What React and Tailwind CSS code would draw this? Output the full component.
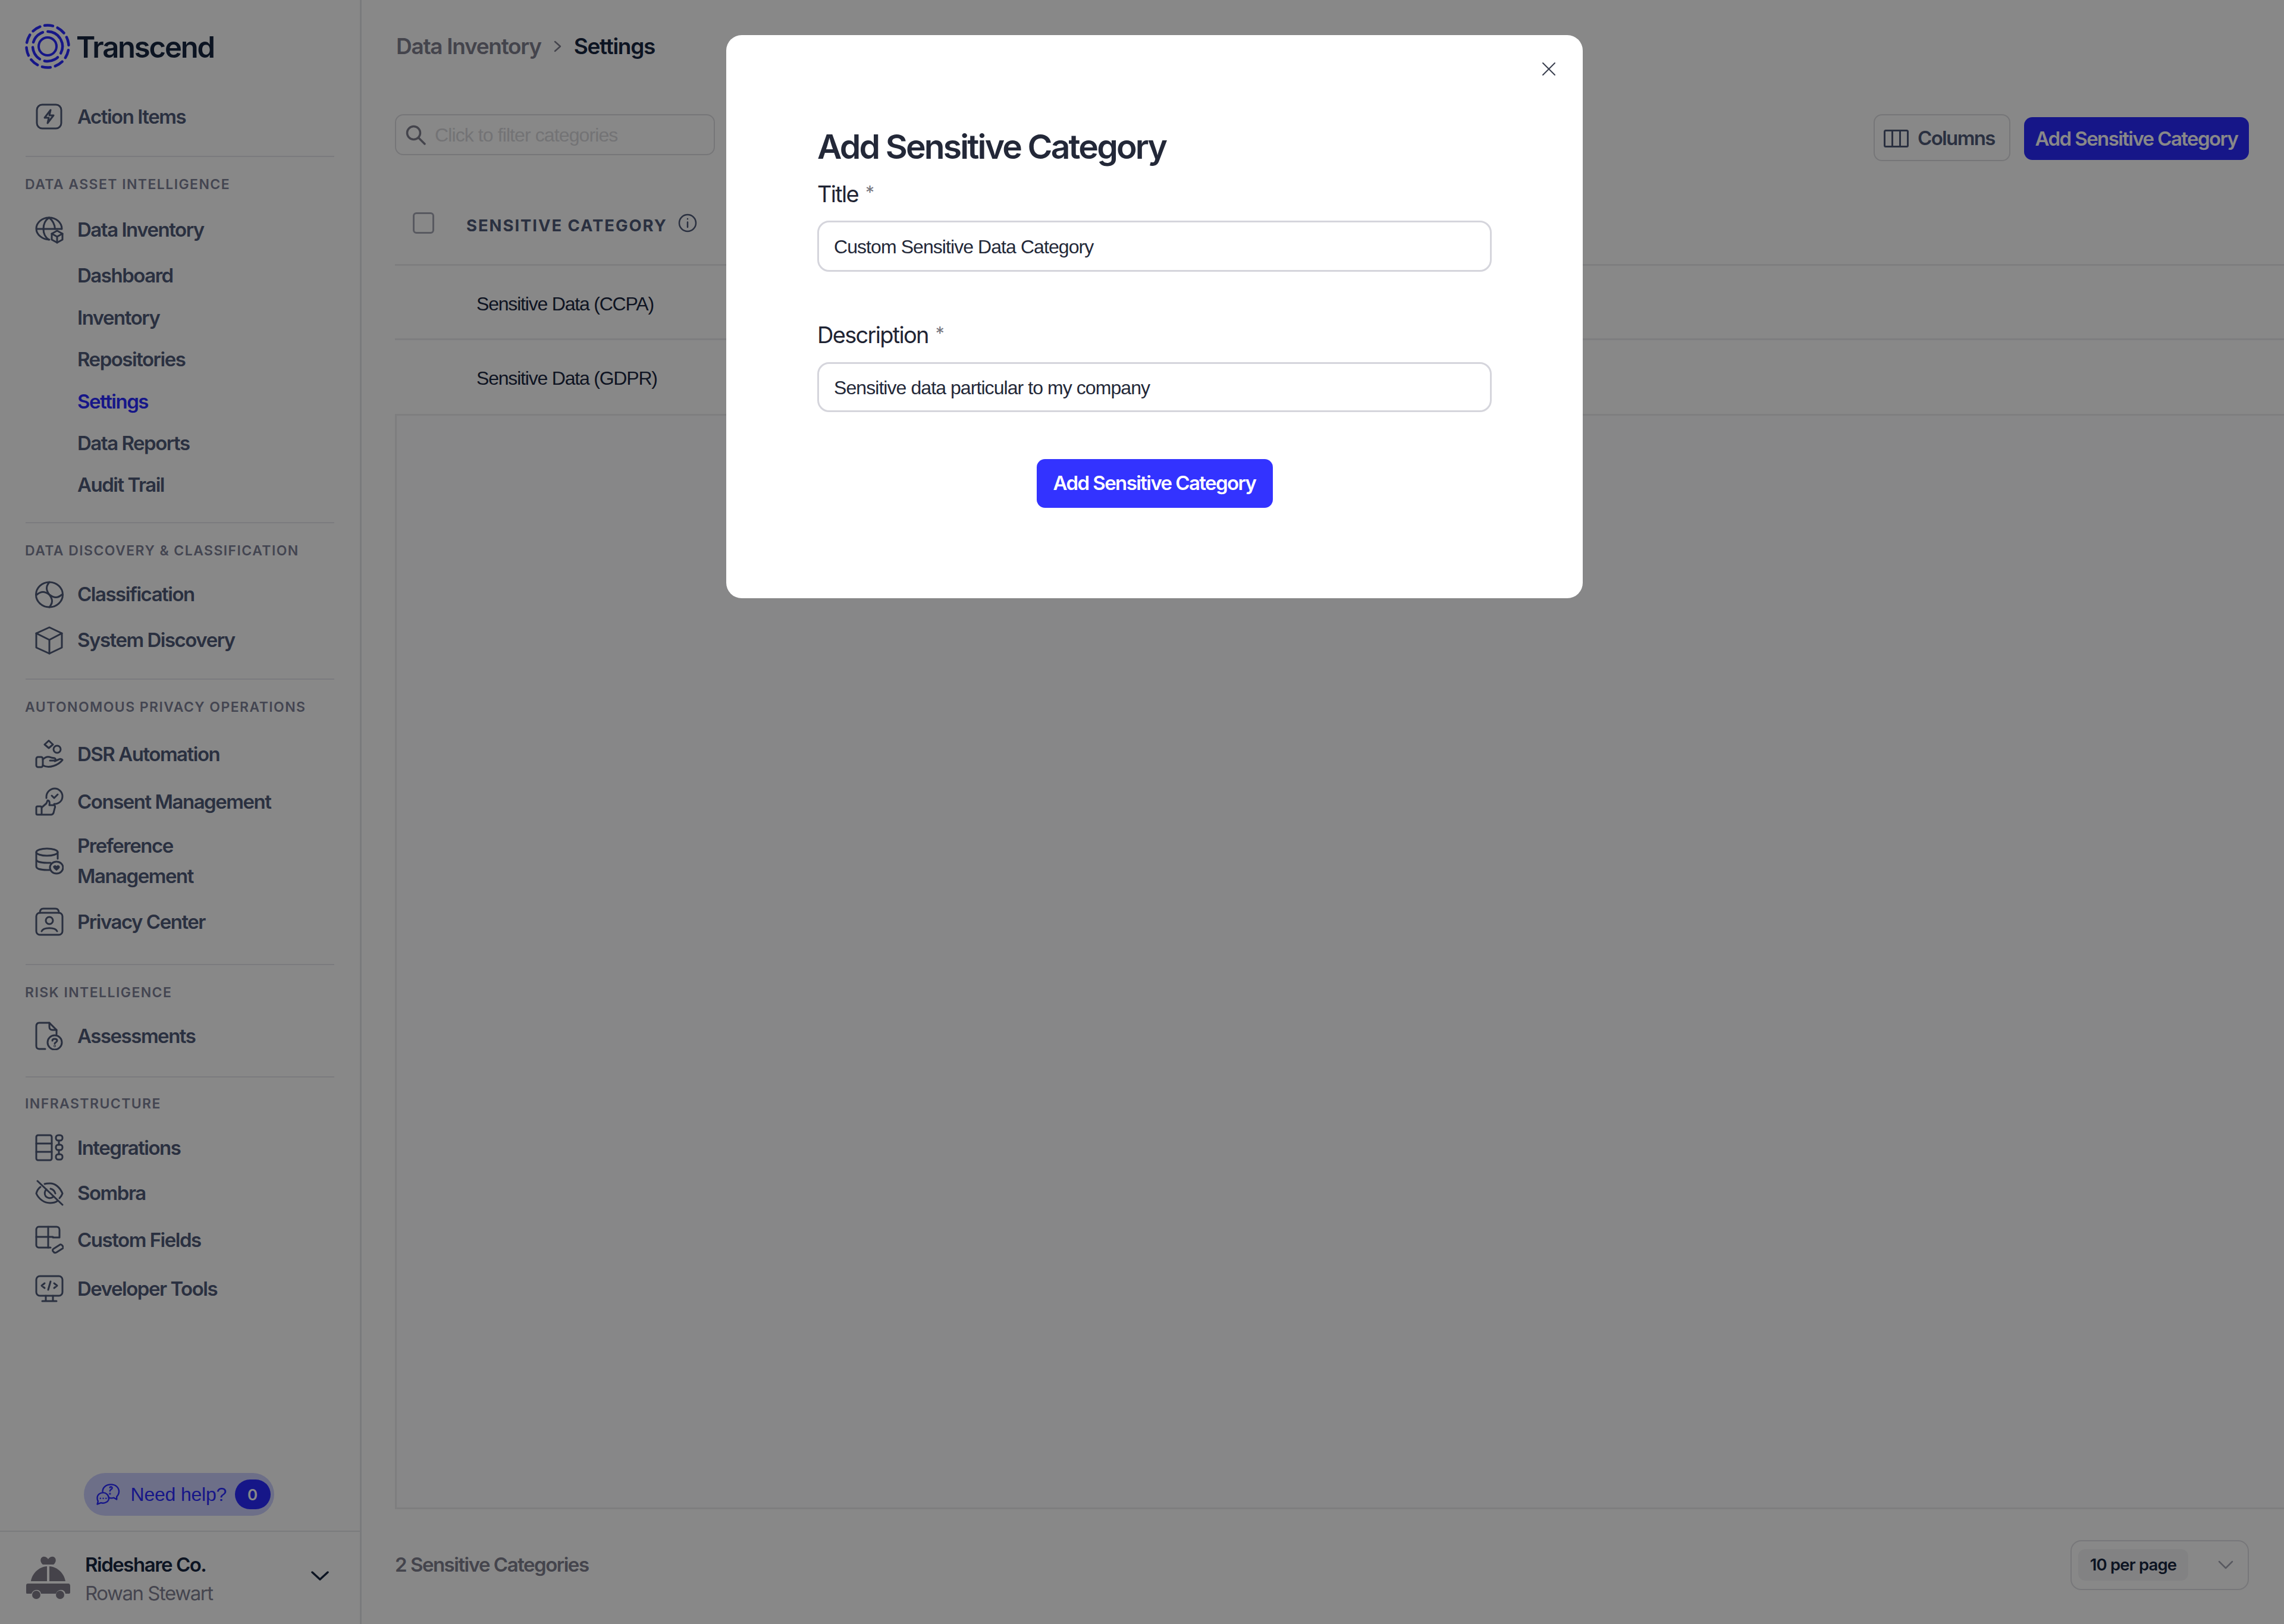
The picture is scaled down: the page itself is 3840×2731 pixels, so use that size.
import React from "react";

const S = { fill: "none", stroke: "currentColor", strokeWidth: 3, strokeLinecap: "round", strokeLinejoin: "round" };
const Ico = ({ children, className = "w-[48px] h-[48px]", vb = "0 0 48 48" }) => (
  <svg viewBox={vb} className={className + " shrink-0"} {...S}>{children}</svg>
);

const icons = {
  action: <Ico><rect x="3" y="4" width="41" height="40" rx="9" /><path d="M26 13 L16 26 H23 L21 35 L31 22 H24 Z" /></Ico>,
  globeBox: <Ico>
    <path d="M24 41C13 41 2 33 2 22.500C2 12 12 4 23.500 4C35 4 45 12 45 23" />
    <path d="M3 23H44" /><path d="M23.500 4C16 9 14 17 14 23C14 30 17 37 23 41" /><path d="M23.500 4C30 9 33 16 33.500 23" />
    <path d="M37 26L46 31V41L37 46L28 41V31Z" /><path d="M28 31L37 36L46 31M37 36V46" />
  </Ico>,
  classify: <Ico>
    <ellipse cx="24" cy="24" rx="22.500" ry="21" />
    <path d="M3 24C10 18 16 18 24 24C32 30 38 30 45 24" />
    <path d="M24 3C18 10 18 16 24 24C30 32 30 38 24 45" />
  </Ico>,
  box: <Ico>
    <path d="M24 2L45 12V36L24 46L2 36V12Z" /><path d="M2 12L24 23L45 12M24 23V46" />
  </Ico>,
  dsr: <Ico>
    <path d="M16 8L23 1.500L30 8L23 14Z" />
    <circle cx="37" cy="16" r="6" />
    <rect x="2" y="29" width="11" height="17" rx="3" />
    <path d="M13 33C18 28 23 28 27 30L33 31C35 32 35 35 31 35H25" />
    <path d="M13 43C18 46 25 46 31 44C37 42 43 38 46 34C45 32 42 32 40 33L33 36" />
  </Ico>,
  consent: <Ico>
    <path d="M19 18C18 8 26 2 33 2C40 2 46 8 46 15C46 23 40 28 32 28" />
    <path d="M28 14L32 18L38 12" />
    <rect x="2" y="32" width="9" height="14" rx="2" />
    <path d="M11 34L19 27L21 22C24 22 25 25 24 30H31C34 30 34 33 33 35L31 43C30 45 29 46 27 46H11" />
  </Ico>,
  pref: <Ico>
    <ellipse cx="20" cy="9" rx="18" ry="6" />
    <path d="M2 9V33C2 37 10 39 20 39H24M38 9V20M2 21C2 25 10 27 20 27H26" />
    <ellipse cx="36" cy="35" rx="11" ry="10" />
    <path d="M31 33C32 31 35 31 36 33C37 31 40 31 41 33C42 36 38 38 36 40C34 38 30 36 31 33Z" fill="currentColor" strokeWidth="1" />
  </Ico>,
  privacy: <Ico>
    <rect x="2" y="9" width="44" height="37" rx="6" />
    <path d="M8 9C8 4 10 2 14 2H34C38 2 40 4 40 9" />
    <circle cx="24" cy="22" r="6" />
    <path d="M11 40C14 33 34 33 37 40" />
  </Ico>,
  assess: <Ico>
    <path d="M17 46H7C4 46 2 44 2 41V8C2 4 4 2 7 2H24L36 14V21" />
    <path d="M24 2V9C24 12 26 14 29 14H36" />
    <circle cx="33" cy="35" r="12" />
    <path d="M29 32C29 28 37 28 37 32C37 35 33 35 33 37" /><circle cx="33" cy="41" r="0.500" />
  </Ico>,
  integ: <Ico>
    <rect x="2" y="3" width="26" height="42" rx="3" />
    <path d="M2 17H28M2 31H28" />
    <rect x="35" y="3" width="11" height="9" rx="4" /><rect x="35" y="19" width="11" height="9" rx="4" /><rect x="35" y="35" width="11" height="9" rx="4" />
    <path d="M40 12V19M40 28V35" />
  </Ico>,
  eyeoff: <Ico>
    <path d="M4 3L46 43" />
    <path d="M9 13C5 16 3 20 2 24C6 33 15 40 25 40C30 40 34 39 37 37" />
    <path d="M16 8C19 7 22 7 25 7C34 7 42 14 46 24C45 27 43 30 41 32" />
    <path d="M19 17C16 20 15 25 18 29C21 32 26 33 30 30" />
    <path d="M26 16C30 17 33 20 34 24" />
  </Ico>,
  fields: <Ico>
    <path d="M26 37H6C4 37 2 35 2 33V7C2 4 4 2 6 2H36C39 2 41 4 41 7V20H30" />
    <path d="M2 19H30M22 2V37" />
    <path d="M31 44C29 43 29 40 31 39L42 32C45 31 48 36 47 38L36 45C34 46 32 46 31 44Z" />
  </Ico>,
  dev: <Ico>
    <rect x="2" y="2" width="44" height="33" rx="6" />
    <path d="M12 44H36M18 35V44M30 35V44" />
    <path d="M16 14L11 18L16 22M32 14L37 18L32 22M26 11L22 25" />
  </Ico>,
};

const Heading = ({ children, className }) => (
  <div className={"h-[30px] pl-[42px] flex items-center text-[23px] font-semibold tracking-[0.062em] uppercase text-[#7f8299] whitespace-nowrap " + className}>{children}</div>
);
const Divider = ({ className }) => <div className={"mx-[43px] h-[2px] bg-[#e6e7ec] " + className} />;
const Row = ({ icon, children, className }) => (
  <div className={"flex items-center pl-[59px] gap-[23px] text-[33px] leading-[51px] font-semibold tracking-[-0.045em] text-[#4f5a78] " + className}>
    <span className="w-[48px] flex justify-center shrink-0">{icon}</span>
    <span>{children}</span>
  </div>
);
const Sub = ({ children, active }) => (
  <div className={"h-[70.400px] pl-[130px] flex items-center text-[33px] font-semibold tracking-[-0.045em] " + (active ? "text-[#2a2aff]" : "text-[#4f5a78]")}>{children}</div>
);

const Logo = () => (
  <svg viewBox="0 0 76 76" className="w-[76px] h-[76px] shrink-0" fill="none" stroke="#2a2aff" strokeLinecap="round">
    <circle cx="38" cy="38" r="15" strokeWidth="4" />
    <circle cx="38" cy="38" r="25" strokeWidth="4.500" strokeDasharray="24 8.400" transform="rotate(-28 38 38)" />
    <circle cx="38" cy="38" r="35.500" strokeWidth="4.500" strokeDasharray="14 8.300" transform="rotate(-98 38 38)" />
  </svg>
);

const Car = () => (
  <svg viewBox="0 0 76 76" className="w-[76px] h-[76px] shrink-0" fill="#817e8c">
    <path d="M29 2C33 1 36 3 38 6C40 3 43 1 47 2C52 4 52 11 47 15H29C24 11 24 4 29 2Z" />
    <path d="M36 18V43H9C11 30 22 19 36 18ZM40 18C54 19 65 30 67 43H40Z" />
    <path d="M4 47H72C74 47 75 49 75 51V62C75 64 73 64 72 64H67C66 58 61 57 57 58C54 59 52 61 51 64H26C25 58 20 57 16 58C13 59 11 61 10 64H2C1 64 1 62 1 60V50C1 48 2 47 4 47Z" />
    <circle cx="18" cy="66" r="7" /><circle cx="58" cy="66" r="7" />
  </svg>
);

const HelpIcon = () => (
  <svg viewBox="0 0 42 38" className="w-[40px] h-[36px] shrink-0" fill="none" stroke="#2a2aff" strokeWidth="2.500" strokeLinecap="round" strokeLinejoin="round">
    <path d="M11 14C11 6 18 1.500 26 1.500C34 1.500 40 7 40 14C40 18 38 21 36 23V28L31 25C28 26 25 26 22 25" />
    <path d="M26 7C26 5 30 5 30 8C30 10 26 10 26 13" transform="translate(-2 0)" /><circle cx="24" cy="18" r="0.600" />
    <path d="M12 16C6 16 1.500 20 1.500 25C1.500 28 2 30 3 31L1.500 36.500L8 34C14 36 22 32 22 26C22 20 17 16 12 16Z" />
    <path d="M7 26H7.200M12 26H12.200M17 26H17.200" />
  </svg>
);

const LIB = "font-['Liberation_Sans',sans-serif]";
const ROW_TEXT = "text-[32px] text-[#1b2740] tracking-[-1.2px] " + LIB;
const INPUT = "rounded-[20px] border-[3px] border-[#d5d5dc] pl-[25px] pt-[2px] flex items-center text-[32px] tracking-[-0.93px] text-[#232838] " + LIB;
const LABEL = "h-[44px] flex items-center text-[38px] tracking-[-0.045em] text-[#1f2433]";

export default function App() {
  return (
    <div className="relative flex w-[3840px] h-[2731px] overflow-hidden bg-white font-['Inter','Liberation_Sans',sans-serif]">
      <aside className="w-[608px] shrink-0 h-full flex flex-col border-r-[3px] border-[#e5e6ea] bg-white">
        <div className="h-[156px] pl-[42px] flex items-center gap-[10px]">
          <Logo />
          <span className="mt-[3px] text-[49px] font-semibold tracking-[-0.045em] text-[#172640]">Transcend</span>
        </div>
        <Row icon={icons.action} className="h-[80px]">Action Items</Row>
        <Divider className="mt-[26px]" />

        <Heading className="mt-[31px]">Data Asset Intelligence</Heading>
        <Row icon={icons.globeBox} className="h-[72px] mt-[25px]">Data Inventory</Row>
        <div className="mt-[7px]">
          <Sub>Dashboard</Sub><Sub>Inventory</Sub><Sub>Repositories</Sub><Sub active>Settings</Sub><Sub>Data Reports</Sub><Sub>Audit Trail</Sub>
        </div>
        <Divider className="mt-[27px]" />

        <Heading className="mt-[31px]">Data Discovery &amp; Classification</Heading>
        <Row icon={icons.classify} className="h-[77px] mt-[20px]">Classification</Row>
        <Row icon={icons.box} className="h-[77px]">System Discovery</Row>
        <Divider className="mt-[26px]" />

        <Heading className="mt-[31px]">Autonomous Privacy Operations</Heading>
        <Row icon={icons.dsr} className="h-[80px] mt-[24px]">DSR Automation</Row>
        <Row icon={icons.consent} className="h-[80px]">Consent Management</Row>
        <Row icon={icons.pref} className="h-[120px]"><span className="block w-[300px]">Preference Management</span></Row>
        <Row icon={icons.privacy} className="h-[84px]">Privacy Center</Row>
        <Divider className="mt-[29px]" />

        <Heading className="mt-[31px]">Risk Intelligence</Heading>
        <Row icon={icons.assess} className="h-[76px] mt-[20px]">Assessments</Row>
        <Divider className="mt-[30px]" />

        <Heading className="mt-[29px]">Infrastructure</Heading>
        <Row icon={icons.integ} className="h-[76px] mt-[21px]">Integrations</Row>
        <Row icon={icons.eyeoff} className="h-[77px]">Sombra</Row>
        <Row icon={icons.fields} className="h-[80px]">Custom Fields</Row>
        <Row icon={icons.dev} className="h-[85px]">Developer Tools</Row>

        <div className="flex-1 flex items-end justify-center pb-[25px] pr-[4px]">
          <div className="h-[72px] w-[320px] rounded-full bg-[#cdd0ff] flex items-center pl-[21px] pr-[6px]">
            <HelpIcon />
            <span className={"ml-[18px] text-[32px] tracking-[-0.2px] text-[#2a2aff] " + LIB}>Need help?</span>
            <span className="ml-auto w-[60px] h-[50px] rounded-full bg-[#2a2aff] text-white text-[26px] font-semibold flex items-center justify-center">0</span>
          </div>
        </div>
        <div className="h-[157px] border-t-[2px] border-[#e5e6ea] flex items-center pl-[43px] pr-[52px]">
          <Car />
          <div className="ml-[24px] flex-1 pt-[3px]">
            <div className="text-[33px] leading-[48px] font-semibold tracking-[-0.045em] text-[#172640]">Rideshare Co.</div>
            <div className="text-[33px] leading-[48px] tracking-[-0.045em] text-[#828294]">Rowan Stewart</div>
          </div>
          <svg viewBox="0 0 30 16" className="w-[30px] h-[16px] mb-[8px]" fill="none" stroke="#172640" strokeWidth="3.500" strokeLinecap="round" strokeLinejoin="round"><path d="M2 2L15 14L28 2" /></svg>
        </div>
      </aside>

      <main className="flex-1 min-w-0 flex flex-col pl-[56px] bg-white">
        <div className="h-[156px] shrink-0 flex items-center text-[37px] font-semibold tracking-[-0.035em]">
          <span className="ml-[2px] text-[#80808f]">Data Inventory</span>
          <svg viewBox="0 0 14 20" className="w-[14px] h-[20px] ml-[21px] mr-[20px]" fill="none" stroke="#80808f" strokeWidth="2.500" strokeLinecap="round" strokeLinejoin="round"><path d="M2 2L11 10L2 18" /></svg>
          <span className="text-[#172640]">Settings</span>
        </div>

        <div className="mt-[36px] h-[79px] shrink-0 flex items-start justify-between pr-[59px]">
          <div className="w-[538px] h-[69px] rounded-[14px] border-[2px] border-[#dedee2] flex items-center pl-[16px] gap-[15px]">
            <svg viewBox="0 0 34 34" className="w-[34px] h-[34px]" fill="none" stroke="#80808f" strokeWidth="3.500" strokeLinecap="round"><circle cx="13.500" cy="13.500" r="11" /><path d="M22 22L32 32" /></svg>
            <span className={"text-[32px] tracking-[-0.9px] text-[#d8d8dc] " + LIB}>Click to filter categories</span>
          </div>
          <div className="flex items-start gap-[23px]">
            <div className="w-[230px] h-[79px] rounded-[14px] border-[2px] border-[#dedee2] flex items-center pl-[15px] pt-[2px] gap-[15px]">
              <svg viewBox="0 0 42 30" className="w-[42px] h-[30px]" fill="none" stroke="#4f5a78" strokeWidth="3"><rect x="1.500" y="1.500" width="39" height="27" rx="2" /><path d="M14.500 1.500V28.500M27.500 1.500V28.500" /></svg>
              <span className="text-[33px] font-semibold tracking-[-0.05em] text-[#4f5a78]">Columns</span>
            </div>
            <div className="mt-[5px] w-[378px] h-[72px] rounded-[14px] pt-[2px] bg-[#2a2aff] flex items-center justify-center text-[33px] font-semibold tracking-[-0.048em] text-white whitespace-nowrap">Add Sensitive Category</div>
          </div>
        </div>

        <div className="h-[176px] shrink-0 pt-[44px] border-b-[3px] border-[#ececee] flex items-center">
          <span className="ml-[30px] w-[36px] h-[36px] rounded-[6px] border-[3px] border-[#a6a8b4] mb-[9px]" />
          <span className="ml-[54px] text-[27.500px] font-bold tracking-[0.07em] uppercase text-[#4f5a78]">Sensitive Category</span>
          <svg viewBox="0 0 32 32" className="ml-[18px] w-[32px] h-[32px] mb-[9px]" fill="none" stroke="#4f5a78" strokeWidth="2.500" strokeLinecap="round"><circle cx="16" cy="16" r="14" /><path d="M16 14.500V23M16 9V9.200" /></svg>
        </div>
        <div className={"h-[125px] shrink-0 pl-[137px] pt-[5px] border-b-[3px] border-[#ececee] flex items-center " + ROW_TEXT}>Sensitive Data (CCPA)</div>
        <div className={"h-[124px] shrink-0 pl-[137px] pt-[3px] flex items-center " + ROW_TEXT}>Sensitive Data (GDPR)</div>
        <div className="flex-1 border-[3px] border-r-0 border-[#ececee] bg-[#fdfdff]" />

        <div className="h-[193px] shrink-0 pb-[6px] pr-[59px] flex items-center justify-between">
          <span className="text-[33px] font-semibold tracking-[-0.045em] text-[#80808f]">2 Sensitive Categories</span>
          <div className="w-[300px] h-[84px] rounded-[18px] border-[2px] border-[#e0e0e4] flex items-center pl-[11px]">
            <span className="w-[185px] h-[53px] rounded-[12px] bg-[#f3f4f6] flex items-center justify-center text-[27.500px] font-semibold tracking-[-0.03em] text-[#172640]">10 per page</span>
            <svg viewBox="0 0 26 16" className="ml-[50px] w-[26px] h-[16px]" fill="none" stroke="#a6a8b4" strokeWidth="2.500" strokeLinecap="round" strokeLinejoin="round"><path d="M2 2L13 13L24 2" /></svg>
          </div>
        </div>
      </main>

      <div className="absolute inset-0 bg-black/[0.467]" />

      <div className="absolute left-[1221px] top-[59px] w-[1440px] h-[947px] rounded-[26px] bg-white flex flex-col px-[153px] pt-[153px]">
        <svg viewBox="0 0 24 24" className="absolute right-[45px] top-[45px] w-[24px] h-[24px]" fill="none" stroke="#3a3f4f" strokeWidth="2" strokeLinecap="round"><path d="M2 2L22 22M22 2L2 22" /></svg>
        <h2 className="h-[70px] flex items-center text-[57px] font-semibold tracking-[-0.05em] text-[#232838]">Add Sensitive Category</h2>
        <div className={"mt-[22px] " + LABEL}>Title<span className="ml-[12px] mb-[6px] text-[30px] text-[#77777f]">*</span></div>
        <div className={"mt-[23px] h-[86px] " + INPUT}>Custom Sensitive Data Category</div>
        <div className={"mt-[84px] " + LABEL}>Description<span className="ml-[12px] mb-[6px] text-[30px] text-[#77777f]">*</span></div>
        <div className={"mt-[24px] h-[84px] " + INPUT}>Sensitive data particular to my company</div>
        <div className="mt-[79px] self-center w-[397px] h-[82px] rounded-[14px] bg-[#3333ff] flex items-center justify-center text-[33px] font-semibold tracking-[-0.048em] text-white whitespace-nowrap">Add Sensitive Category</div>
      </div>
    </div>
  );
}
